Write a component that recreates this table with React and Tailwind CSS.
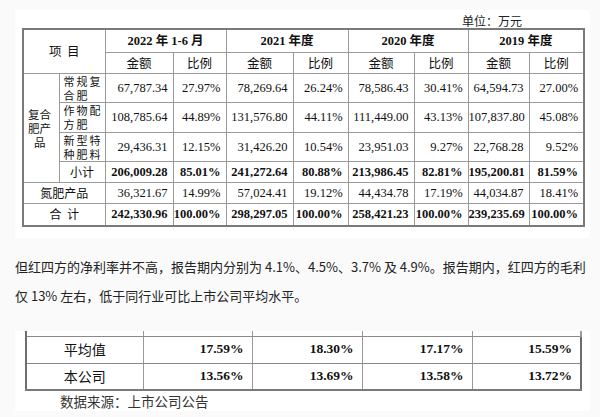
import React from "react";

const SERIF = { fontFamily: "'Liberation Serif', 'Noto Sans CJK SC', serif" };
const SANS = { fontFamily: "'Noto Sans CJK SC', 'Noto Sans', sans-serif" };

const COLS = [36, 46, 68, 53, 67, 55, 66, 54, 61, 55];

const ROWS = [
  { sub: ["常规复", "合肥"], h: "h-[29px]", v: ["67,787.34", "27.97%", "78,269.64", "26.24%", "78,586.43", "30.41%", "64,594.73", "27.00%"] },
  { sub: ["作物配", "方肥"], h: "h-[30px]", v: ["108,785.64", "44.89%", "131,576.80", "44.11%", "111,449.00", "43.13%", "107,837.80", "45.08%"] },
  { sub: ["新型特", "种肥料"], h: "h-[29px]", v: ["29,436.31", "12.15%", "31,426.20", "10.54%", "23,951.03", "9.27%", "22,768.28", "9.52%"] },
];

const SUBTOTAL = ["206,009.28", "85.01%", "241,272.64", "80.88%", "213,986.45", "82.81%", "195,200.81", "81.59%"];
const NITRO = ["36,321.67", "14.99%", "57,024.41", "19.12%", "44,434.78", "17.19%", "44,034.87", "18.41%"];
const TOTAL = ["242,330.96", "100.00%", "298,297.05", "100.00%", "258,421.23", "100.00%", "239,235.69", "100.00%"];

const td = "border border-[#9a9a9a] p-0 whitespace-nowrap overflow-hidden";
const num = td + " text-right pr-[5px]";

function NumCells({ values, bold }) {
  return values.map((v, i) => (
    <td key={i} className={num + (bold ? " font-bold" : "")}>{v}</td>
  ));
}

export default function App() {
  return (
    <div className="w-[600px] h-[417px] bg-[#fafafa] overflow-hidden text-[#1a1a1a]">
      {/* top table image */}
      <div className="mt-[10px] ml-[15px] w-[575px] h-[228px] bg-white pl-[7px] pt-[3px]">
        <div className="pl-[440px] text-[12px] leading-[15px] text-[#222] whitespace-nowrap" style={SANS}>
          单位：万元
        </div>
        <table className="table-fixed border-collapse border-2 border-[#7a7a7a] text-[12.5px] leading-[14px] text-[#111]" style={{ ...SERIF, width: 561 }}>
          <colgroup>
            {COLS.map((w, i) => (
              <col key={i} style={{ width: w }} />
            ))}
          </colgroup>
          <tbody>
            <tr className="h-[23px]">
              <td rowSpan={2} colSpan={2} className={td + " text-center text-[12.5px]"} style={SANS}>项&nbsp;&nbsp;目</td>
              <td colSpan={2} className={td + " text-center font-bold"}>2022 年 1-6 月</td>
              <td colSpan={2} className={td + " text-center font-bold"}>2021 年度</td>
              <td colSpan={2} className={td + " text-center font-bold"}>2020 年度</td>
              <td colSpan={2} className={td + " text-center font-bold"}>2019 年度</td>
            </tr>
            <tr className="h-[21px]">
              {[0, 1, 2, 3].map((i) => (
                <React.Fragment key={i}>
                  <td className={td + " text-center"} style={SANS}>金额</td>
                  <td className={td + " text-center"} style={SANS}>比例</td>
                </React.Fragment>
              ))}
            </tr>
            {ROWS.map((r, i) => (
              <tr key={i} className={r.h}>
                {i === 0 && (
                  <td rowSpan={4} className={td + " pl-[4px] text-[11.5px] leading-[14px]"} style={SANS}>
                    <div>复合</div>
                    <div>肥产</div>
                    <div className="pl-[6px]">品</div>
                  </td>
                )}
                <td className={td + " pl-[4px] text-[11px] leading-[14px] tracking-[2px]"} style={SANS}>
                  <div>{r.sub[0]}</div>
                  <div>{r.sub[1]}</div>
                </td>
                <NumCells values={r.v} />
              </tr>
            ))}
            <tr className="h-[21px]">
              <td className={td + " text-center text-[12px]"} style={SANS}>小计</td>
              <NumCells values={SUBTOTAL} bold />
            </tr>
            <tr className="h-[21px]">
              <td colSpan={2} className={td + " text-center text-[12px]"} style={SANS}>氮肥产品</td>
              <NumCells values={NITRO} />
            </tr>
            <tr className="h-[23px]">
              <td colSpan={2} className={td + " text-center text-[12px]"} style={SANS}>合&nbsp;&nbsp;计</td>
              <NumCells values={TOTAL} bold />
            </tr>
          </tbody>
        </table>
      </div>

      {/* paragraph */}
      <div className="mt-[14px] pl-[15px] text-[13px] leading-[29px] text-[#222] whitespace-nowrap" style={SANS}>
        <div>但红四方的净利率并不高，报告期内分别为 4.1%、4.5%、3.7% 及 4.9%。报告期内，红四方的毛利</div>
        <div>仅 13% 左右，低于同行业可比上市公司平均水平。</div>
      </div>

      {/* second table image */}
      <div className="mt-[21px] ml-[15px] w-[575px] h-[80px] bg-white pl-[10px]">
        <table className="table-fixed border-collapse text-[13.5px] text-[#111]" style={SERIF}>
          <colgroup>
            {[117, 109, 110, 110, 109].map((w, i) => (
              <col key={i} style={{ width: w }} />
            ))}
          </colgroup>
          <tbody>
            <tr className="h-[5px]">
              {[0, 1, 2, 3, 4].map((i) => (
                <td
                  key={i}
                  className={
                    "p-0 border-b border-b-[#8a8a8a] border-r border-r-[#9a9a9a] " +
                    (i === 0 ? "border-l-2 border-l-[#6e6e6e] " : "") +
                    (i === 4 ? "border-r-2 border-r-[#6e6e6e]" : "")
                  }
                />
              ))}
            </tr>
            {[
              { l: "平均值", v: ["17.59%", "18.30%", "17.17%", "15.59%"], h: "h-[27px]" },
              { l: "本公司", v: ["13.56%", "13.69%", "13.58%", "13.72%"], h: "h-[27px]" },
            ].map((r, ri) => (
              <tr key={ri} className={r.h}>
                <td
                  className={"p-0 text-center border-l-2 border-l-[#6e6e6e] border-r border-r-[#9a9a9a] text-[14px] border-b " + (ri === 1 ? "border-b-2 border-b-[#7a7a7a]" : "border-b-[#8a8a8a]")}
                  style={SANS}
                >
                  {r.l}
                </td>
                {r.v.map((v, i) => (
                  <td
                    key={i}
                    className={
                      "p-0 pr-[8px] text-right font-bold border-b " +
                      (ri === 1 ? "border-b-2 border-b-[#7a7a7a] " : "border-b-[#8a8a8a] ") +
                      (i === 3 ? "border-r-2 border-r-[#6e6e6e]" : "border-r border-r-[#9a9a9a]")
                    }
                  >
                    {v}
                  </td>
                ))}
              </tr>
            ))}
          </tbody>
        </table>
        <div className="pl-[35px] text-[13.5px] leading-[18px] mt-[1px] text-[#333]" style={SANS}>
          数据来源：上市公司公告
        </div>
      </div>
    </div>
  );
}
